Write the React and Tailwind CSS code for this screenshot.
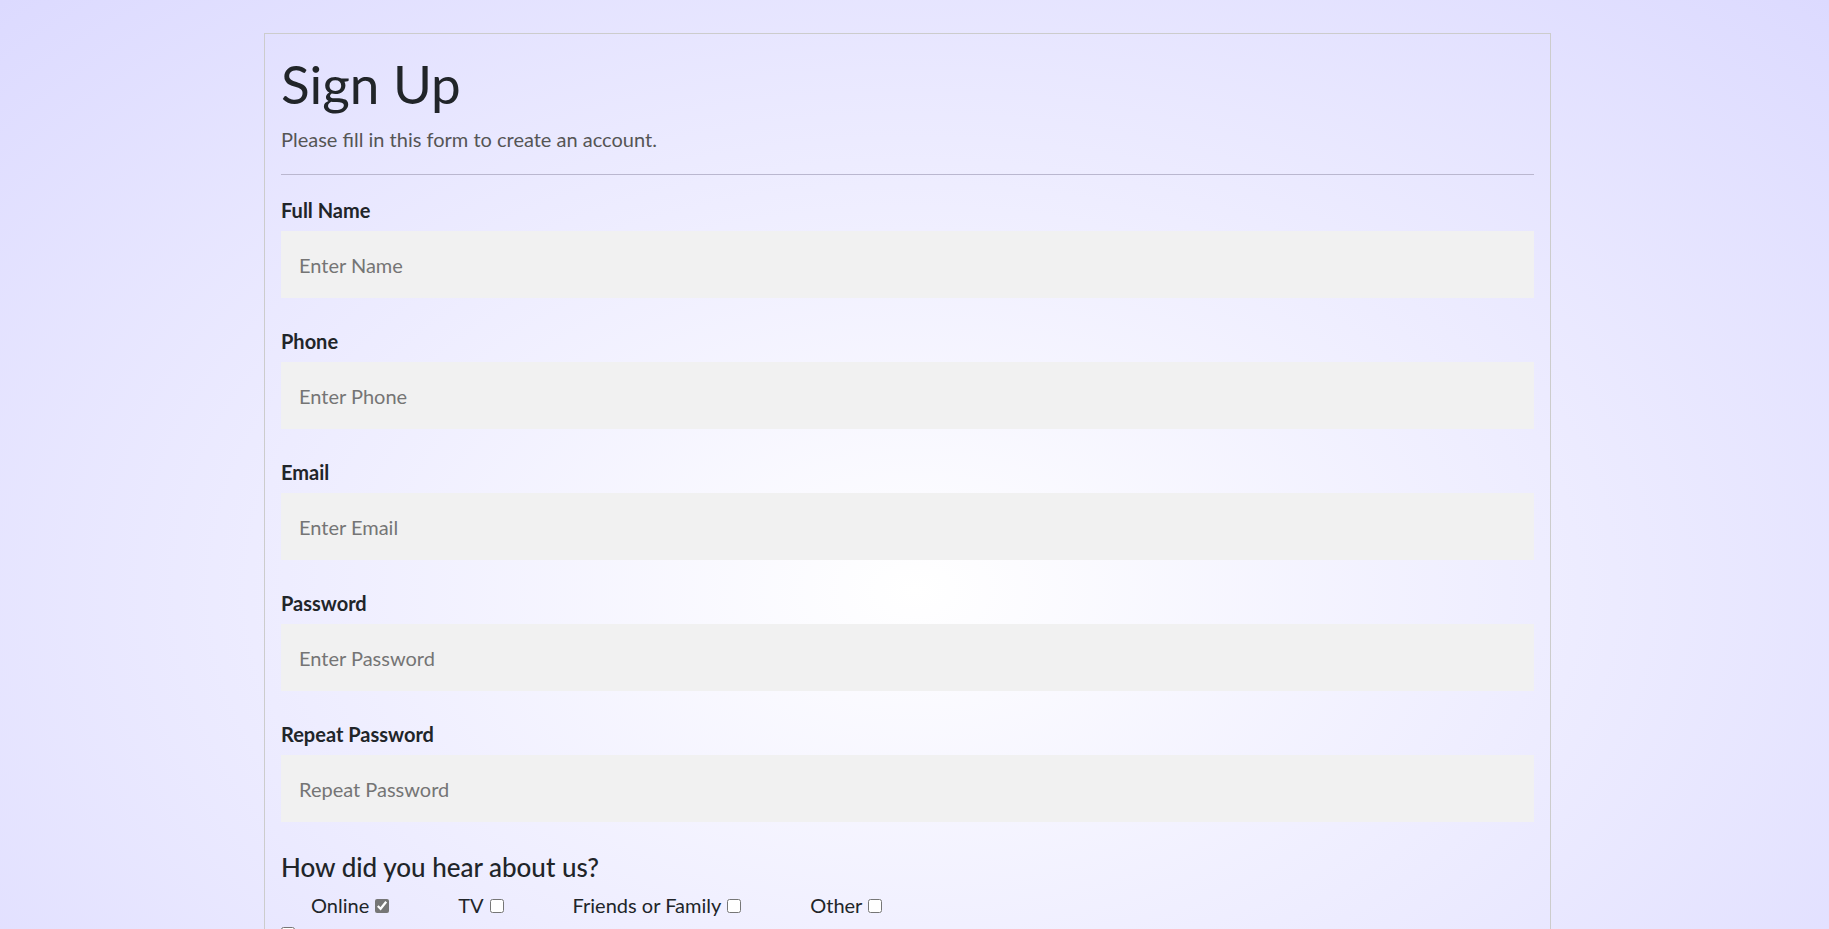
import React from 'react';

const fields = [
  { label: 'Full Name', placeholder: 'Enter Name', type: 'text' },
  { label: 'Phone', placeholder: 'Enter Phone', type: 'tel' },
  { label: 'Email', placeholder: 'Enter Email', type: 'email' },
  { label: 'Password', placeholder: 'Enter Password', type: 'password' },
  { label: 'Repeat Password', placeholder: 'Repeat Password', type: 'password' },
];

const sources = [
  { label: 'Online', checked: true },
  { label: 'TV', checked: false },
  { label: 'Friends or Family', checked: false },
  { label: 'Other', checked: false },
];

function Field({ label, placeholder, type }) {
  return (
    <div className="mb-[31px]">
      <label className="block text-[20px] leading-[24px] font-bold text-[#212529] mb-[9px]">
        {label}
      </label>
      <input
        type={type}
        placeholder={placeholder}
        className="block w-full h-[67px] bg-[#f1f1f1] px-[18px] text-[20px] text-[#212529] placeholder:text-[#757575] outline-none"
      />
    </div>
  );
}

export default function App() {
  return (
    <div
      className="min-h-[1180px] w-full pt-[33px] pb-[40px] bg-[radial-gradient(ellipse_at_50%_590px,#ffffff_0%,#dcdaff_100%)]"
      style={{ fontFamily: 'Lato, "Open Sans", sans-serif' }}
    >
      <form className="ml-[264px] w-[1287px] border border-[#cccccc] px-[16px] pt-[18px] pb-[16px]">
        <h1 className="text-[53px] leading-[64px] font-normal text-[#212529]">Sign Up</h1>
        <p className="mt-[8px] text-[20px] leading-[30px] text-[#555555]">
          Please fill in this form to create an account.
        </p>
        <hr className="mt-[20px] mb-[23px] border-0 border-t border-[#bab7cf]" />

        {fields.map((f) => (
          <Field key={f.label} {...f} />
        ))}

        <h3 className="-mt-[1px] text-[26px] leading-[30px] font-medium text-[#212529]">
          How did you hear about us?
        </h3>
        <div className="mt-[9px] flex items-baseline gap-[69px] pl-[30px] text-[20px] leading-[28px] text-[#212529]">
          {sources.map((s) => (
            <label key={s.label} className="flex items-baseline">
              {s.label}
              <input
                type="checkbox"
                defaultChecked={s.checked}
                className="ml-[6px] w-[14px] h-[14px] m-0 accent-[#767676]"
              />
            </label>
          ))}
        </div>

        <label className="mt-[8px] flex items-start gap-[8px] text-[20px] leading-[20px] text-[#212529]">
          <input type="checkbox" className="w-[14px] h-[14px] m-0 accent-[#767676]" />
          Remember me
        </label>

        <p className="mt-[16px] text-[18px] text-[#555555]">
          By creating an account you agree to our{' '}
          <a href="#" className="text-[#1e90ff]">Terms &amp; Privacy</a>.
        </p>

        <div className="mt-[16px] flex gap-[16px]">
          <button type="button" className="flex-1 h-[56px] bg-[#f44336] text-white text-[20px]">
            Cancel
          </button>
          <button type="submit" className="flex-1 h-[56px] bg-[#04aa6d] text-white text-[20px]">
            Sign Up
          </button>
        </div>
      </form>
    </div>
  );
}
